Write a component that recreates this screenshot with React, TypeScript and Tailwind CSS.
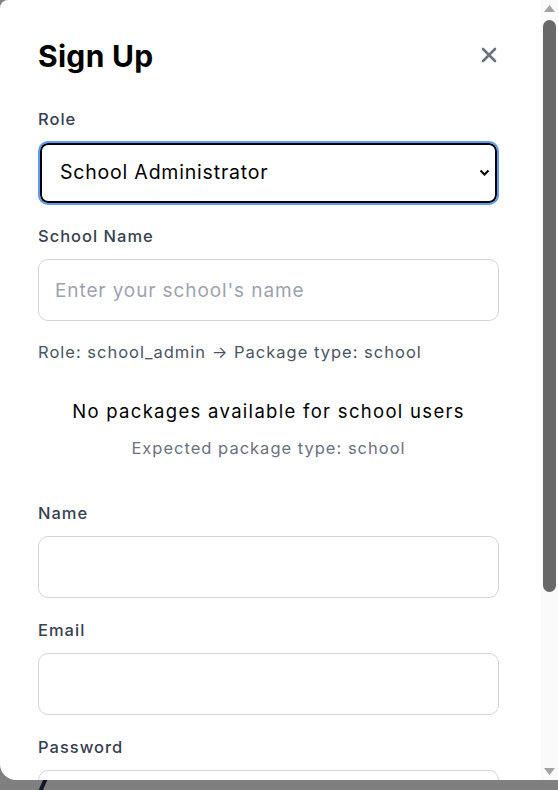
import React, { useState } from "react";

const font = { fontFamily: "Inter, 'Noto Sans', sans-serif" };

const Field = ({
  label,
  placeholder,
  type = "text",
  className = "mb-5",
}: {
  label: string;
  placeholder?: string;
  type?: string;
  className?: string;
}) => (
  <div className={className}>
    <label className="block h-6 leading-6 mb-[11px] text-[16.5px] tracking-[1px] font-medium text-[#374151]">{label}</label>
    <input
      type={type}
      placeholder={placeholder}
      className="block w-full h-[62px] rounded-[10px] border border-[#d1d5db] bg-white px-4 text-[19px] tracking-[0.9px] text-black placeholder:text-[#9ca3af] focus:outline-none"
      style={font}
    />
  </div>
);

export default function App() {
  const [role, setRole] = useState("school_admin");

  return (
    <div className="relative h-[790px] w-[558px] overflow-hidden bg-[#7f7f7f]" style={font}>
      {/* bout de la page derrière l'overlay */}
      <svg className="absolute left-[36px] top-[778px]" width="14" height="14" viewBox="0 0 14 14">
        <line x1="10" y1="0" x2="4" y2="14" stroke="#111827" strokeWidth="4" />
      </svg>

      <div className="relative flex h-[780px] w-full overflow-hidden rounded-tl-lg rounded-bl-2xl bg-white">
        <div className="flex-1 overflow-hidden">
          <div className="ml-[38px] w-[461px] pt-[38px] pb-[60px]">
            {/* entête */}
            <div className="flex items-center justify-between">
              <h2 className="text-[30px] leading-9 tracking-[0.3px] font-bold text-black">Sign Up</h2>
              <button className="mr-[2px] -mt-[2px] text-[#6b7280]">
                <svg width="16" height="16" viewBox="0 0 16 16" fill="none" stroke="currentColor" strokeWidth="2.6" strokeLinecap="round">
                  <path d="M2 2l12 12M14 2L2 14" />
                </svg>
              </button>
            </div>

            {/* rôle */}
            <div className="mt-[33px] mb-[19px]">
              <label className="block h-6 leading-6 mb-[10px] text-[16.5px] tracking-[1px] font-medium text-[#374151]">Role</label>
              <div className="relative">
                <select
                  value={role}
                  onChange={(e) => setRole(e.target.value)}
                  className="block w-full h-[64px] appearance-none rounded-[10px] border-2 border-[#5b9af5] bg-white pl-5 text-[19.5px] tracking-[0.8px] text-black shadow-[inset_0_0_0_2px_#000] focus:outline-none"
                  style={{ ...font, appearance: "none" }}
                >
                  <option value="student">Student</option>
                  <option value="teacher">Teacher</option>
                  <option value="school_admin">School Administrator</option>
                </select>
                <svg className="pointer-events-none absolute right-[9px] top-[28px]" width="11" height="8" viewBox="0 0 11 8" fill="none" stroke="#000" strokeWidth="2">
                  <path d="M1.5 1.5l4 4 4-4" />
                </svg>
              </div>
            </div>

            <Field label="School Name" placeholder="Enter your school's name" className="mb-[19px]" />

            <p className="h-6 leading-6 text-[16.5px] tracking-[1px] text-[#4b5563]">Role: school_admin → Package type: school</p>

            {/* forfaits */}
            <div className="mt-[33px] text-center">
              <p className="h-7 leading-7 text-[18.5px] tracking-[1.3px] text-black">No packages available for school users</p>
              <p className="mt-[11px] h-6 leading-6 text-[16.5px] tracking-[1px] text-[#6b7280]">Expected package type: school</p>
            </div>

            <div className="mt-[41px]">
              <Field label="Name" />
              <Field label="Email" type="email" />
              <Field label="Password" type="password" />
            </div>
          </div>
        </div>

        {/* barre de défilement */}
        <div className="flex w-[17px] shrink-0 flex-col items-center bg-[#fafafa] py-[5px]">
          <svg width="11" height="7" viewBox="0 0 11 7"><path d="M5.5 0L11 7H0z" fill="#a3a3a3" /></svg>
          <div className="mt-[8px] h-[572px] w-[13px] rounded-full bg-[#686868]" />
          <div className="flex-1" />
          <svg width="11" height="7" viewBox="0 0 11 7"><path d="M0 0h11L5.5 7z" fill="#a3a3a3" /></svg>
        </div>
      </div>
    </div>
  );
}
